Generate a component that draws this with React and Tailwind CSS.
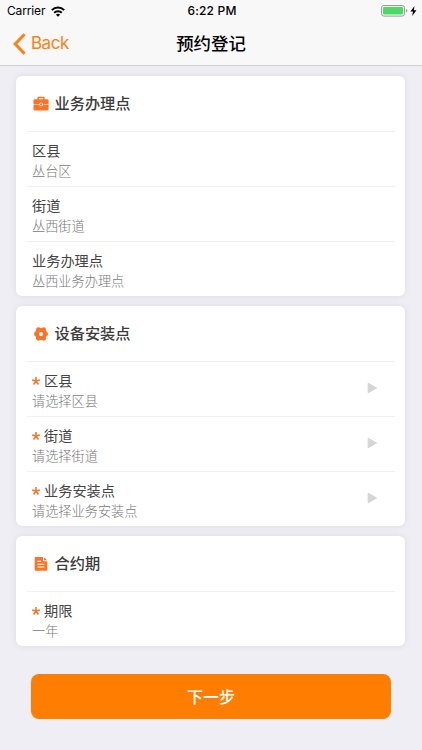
import React from "react";

const cards = [
    {
        title: "业务办理点",
        icon: "case",
        rows: [
            { label: "区县", value: "丛台区" },
            { label: "街道", value: "丛西街道" },
            { label: "业务办理点", value: "丛西业务办理点" },
        ],
    },
    {
        title: "设备安装点",
        icon: "gear",
        rows: [
            { label: "区县", value: "请选择区县", required: true, arrow: true },
            { label: "街道", value: "请选择街道", required: true, arrow: true },
            { label: "业务安装点", value: "请选择业务安装点", required: true, arrow: true },
        ],
    },
    {
        title: "合约期",
        icon: "file",
        rows: [{ label: "期限", value: "一年", required: true }],
    },
];

const CardIcon = ({ name }) => {
    if (name === "case") {
        return (
            <svg width="16" height="16" viewBox="0 0 16 16" fill="#fa7427">
                <path fillRule="evenodd" d="M4.4 3.3V1.9Q4.4 .7 5.6 .7H10.5Q11.7 .7 11.7 1.9V3.3H14.3Q15.6 3.3 15.6 4.5V8H10A2 2 0 0 0 6.1 8H.5V4.5Q.5 3.3 1.8 3.3ZM6 3.3H10.1V2.2H6Z" />
                <path d="M.5 8.6H6.1A2 2 0 0 0 10 8.6H15.6V13.3Q15.6 14.5 14.4 14.5H1.7Q.5 14.5.5 13.3Z" />
                <circle cx="8.05" cy="8.3" r="1.1" />
            </svg>
        );
    }
    if (name === "gear") {
        return (
            <svg width="16" height="16" viewBox="0 0 16 16" fill="none" stroke="#fa7427">
                <circle cx="8" cy="8" r="4" strokeWidth="4" />
                <g fill="#fa7427" stroke="none">
                    <circle cx="5.4" cy="3.7" r="2.4" />
                    <circle cx="10.6" cy="3.7" r="2.4" />
                    <circle cx="12.6" cy="8" r="2.4" />
                    <circle cx="10.6" cy="12.3" r="2.4" />
                    <circle cx="5.4" cy="12.3" r="2.4" />
                    <circle cx="3.4" cy="8" r="2.4" />
                </g>
            </svg>
        );
    }
    return (
        <svg width="16" height="16" viewBox="0 0 16 16">
            <path d="M2.7 1H10V5.2H14.3V13.7Q14.3 14.7 13.3 14.7H2.7Q1.7 14.7 1.7 13.7V2Q1.7 1 2.7 1Z" fill="#fa7427" />
            <path d="M11 1.3L14.1 4.3H11Z" fill="#fa7427" />
            <path d="M4.4 5.4H7.9M4.4 8.2H11.3M4.4 11H11.3" stroke="#fff" strokeWidth="1.1" />
        </svg>
    );
};

const StatusBar = () => (
    <div className="flex h-[22px] items-center px-[7px] text-[12px] text-black">
        <div className="flex flex-1 items-center gap-[6px]">
            <span className="tracking-[-0.15px]">Carrier</span>
            <svg width="14" height="11" viewBox="0 0 14 11" fill="none" stroke="#000" strokeWidth="2">
                <path d="M.8 4.1A8.8 8.8 0 0 1 13.2 4.1" />
                <path d="M3.2 6.7A5.4 5.4 0 0 1 10.8 6.7" />
                <path d="M7 10.8L4.9 8.7A3 3 0 0 1 9.1 8.7Z" fill="#000" stroke="none" />
            </svg>
        </div>
        <span className="font-medium tracking-[0.2px]">6:22 PM</span>
        <div className="-mr-[2px] flex flex-1 items-center justify-end gap-[2px]">
            <svg width="27" height="12" viewBox="0 0 27 12">
                <rect x=".5" y=".5" width="23" height="10.6" rx="2.4" fill="none" stroke="#9b9b9d" />
                <rect x="2" y="2" width="20" height="7.6" rx="1" fill="#4cd964" />
                <path d="M25 4V7.6Q26.4 7 26.4 5.8T25 4Z" fill="#9b9b9d" />
            </svg>
            <svg width="7" height="10" viewBox="0 0 7 10">
                <path d="M4.5 0L.4 5.6H3L2.2 10L6.5 4.2H3.8Z" fill="#000" />
            </svg>
        </div>
    </div>
);

const NavBar = () => (
    <div className="flex h-[43px] items-center px-[13px]">
        <div className="flex flex-1 items-center gap-[5px] text-[#fd8011]">
            <svg width="13" height="22" viewBox="0 0 13 22" fill="none" stroke="currentColor" strokeWidth="3">
                <path d="M11.6 1.3L2.2 11L11.6 20.7" />
            </svg>
            <span className="text-[17px] leading-none tracking-[-0.5px]">Back</span>
        </div>
        <h1 className="text-[17.4px] font-medium leading-none text-black">预约登记</h1>
        <div className="flex-1" />
    </div>
);

const Row = ({ row }) => (
    <div className="ml-[11px] mr-[10px] flex h-[55px] items-center justify-between border-t border-[#f1f1f2] pl-[5px] pr-[17px]">
        <div className="pt-[5px]">
            <div className="flex h-[21px] items-center text-[14.2px] text-[#444]">
                {row.required && (
                    <svg className="mr-[4px]" width="8" height="8" viewBox="0 0 8 8" stroke="#fa7427" strokeWidth="1.6">
                        <path d="M4 4.1V0M4 4.1L.1 2.9M4 4.1L7.9 2.9M4 4.1L1.6 7.5M4 4.1L6.4 7.5" />
                    </svg>
                )}
                {row.label}
            </div>
            <div className="flex h-[22px] items-center text-[13.2px] font-light text-[#787878]">{row.value}</div>
        </div>
        {row.arrow && (
            <svg className="-mt-[3px]" width="11" height="12" viewBox="0 0 11 12" fill="#d5d5d6" stroke="#d5d5d6" strokeLinejoin="round">
                <path d="M1.2 1.2L9.6 6L1.2 10.8Z" />
            </svg>
        )}
    </div>
);

const Card = ({ card }) => (
    <section className="overflow-hidden rounded-[6px] bg-white shadow-[0_0_6px_rgba(60,60,90,0.1)]">
        <div className="flex h-[55px] items-center gap-[6px] pl-[16.5px]">
            <CardIcon name={card.icon} />
            <h2 className="text-[15.2px] font-medium leading-none text-[#3c3c3c]">{card.title}</h2>
        </div>
        {card.rows.map((row) => (
            <Row key={row.label} row={row} />
        ))}
    </section>
);

const App = () => {
    return (
        <div className="min-h-[750px] w-full bg-[#efeef4] font-['Inter','Noto_Sans_CJK_SC',sans-serif]">
            <header className="h-[66px] border-b border-[#cfcfd3] bg-[#f8f8f9]">
                <StatusBar />
                <NavBar />
            </header>
            <main className="flex flex-col gap-[10px] pl-[16px] pr-[17px] pt-[10px]">
                {cards.map((card) => (
                    <Card key={card.title} card={card} />
                ))}
            </main>
            <div className="px-[31px] pt-[28px]">
                <button className="h-[45px] w-full rounded-[8px] bg-[#ff7d00] text-[16px] font-medium text-white">
                    下一步
                </button>
            </div>
        </div>
    );
};

export default App;
